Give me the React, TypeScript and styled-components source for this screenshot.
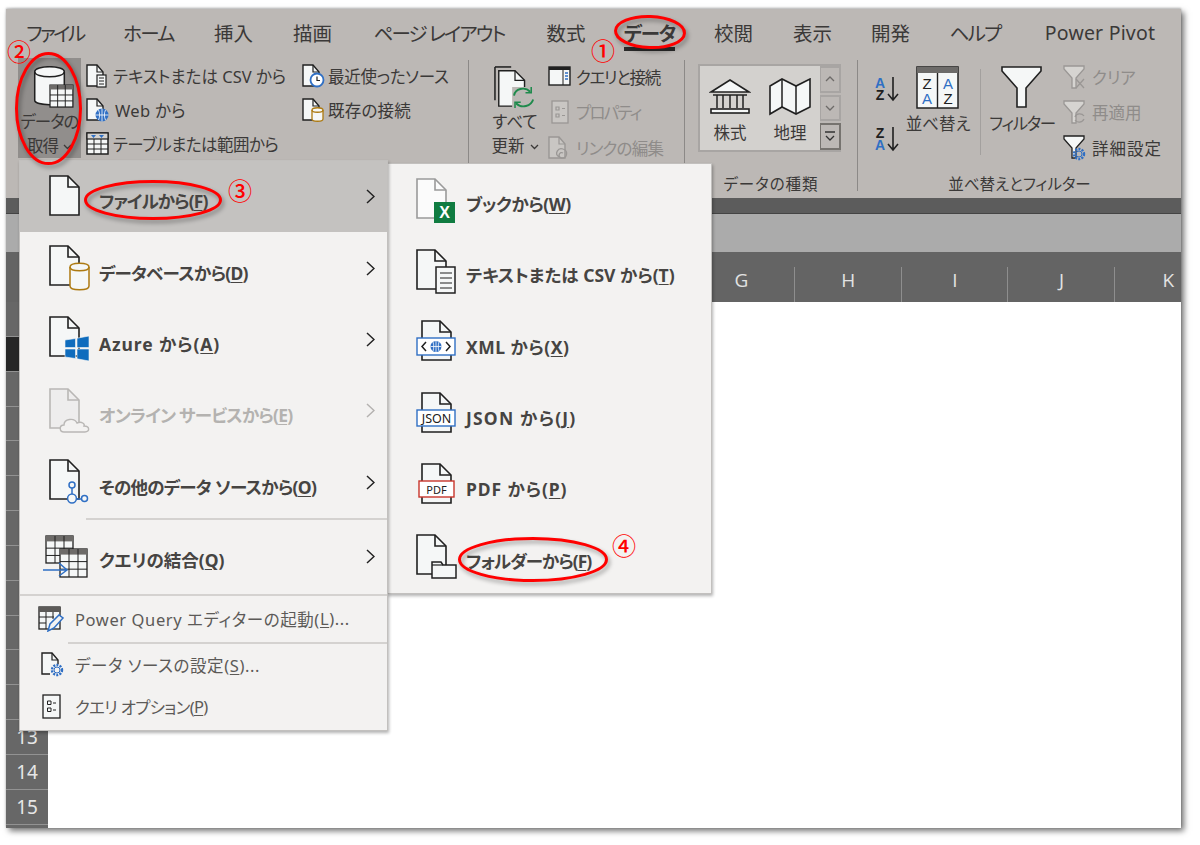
import React from "react";
import styled, { createGlobalStyle } from "styled-components";

const Global = createGlobalStyle`
    html, body {
        margin: 0;
        padding: 0;
        background: #fff;
    }
    body {
        font-family: "Noto Sans", "Noto Sans CJK JP", sans-serif;
        font-feature-settings: "palt";
        color: #3b3938;
    }
`

const Page = styled.div`
    position: relative;
    width: 1200px;
    height: 845px;
    padding: 9px 0 0 6px;
    box-sizing: border-box;
    overflow: hidden;
`

const Excel = styled.div`
    width: 1175px;
    height: 819px;
    display: flex;
    flex-direction: column;
    background: #fff;
    overflow: hidden;
    box-shadow: 3px 3px 6px rgba(0, 0, 0, .55), 0 -1px 2px rgba(0, 0, 0, .25);
`

const TabBar = styled.div`
    height: 42px;
    flex-shrink: 0;
    display: flex;
    padding-left: 21px;
    background: #bcb8b5;
`

const Tab = styled.div<{ $active?: boolean; $ls: number; $w: number; $ml: number }>`
    width: ${p => p.$w}px;
    margin-left: ${p => p.$ml}px;
    flex-shrink: 0;
    padding-top: 8px;
    display: flex;
    align-items: center;
    justify-content: center;
    font-size: 19.5px;
    white-space: nowrap;
    letter-spacing: ${p => p.$ls}px;
    font-weight: ${p => (p.$active ? 700 : 400)};
    border-bottom: 4px solid ${p => (p.$active ? "#2b2b2b" : "transparent")};
`

const Ribbon = styled.div`
    height: 147px;
    flex-shrink: 0;
    box-sizing: border-box;
    padding-top: 7px;
    display: flex;
    background: #bcb8b5;
`

const Group = styled.div<{ $w: number }>`
    width: ${p => p.$w}px;
    flex-shrink: 0;
    display: flex;
    flex-direction: column;
`

const GroupBody = styled.div<{ $pad: number }>`
    flex: 1;
    display: flex;
    padding-left: ${p => p.$pad}px;
`

const GroupLabel = styled.div<{ $ls?: number }>`
    height: 22px;
    margin-bottom: 3px;
    line-height: 22px;
    font-size: 15.5px;
    letter-spacing: ${p => p.$ls ?? 0}px;
    text-align: center;
    white-space: nowrap;
`

const GroupSep = styled.div`
    width: 1px;
    flex-shrink: 0;
    margin: 2px 0 7px;
    background: #8c8987;
`

const BigButton = styled.div<{ $w: number; $pressed?: boolean; $ml?: number }>`
    width: ${p => p.$w}px;
    height: 100px;
    flex-shrink: 0;
    margin-left: ${p => p.$ml ?? 0}px;
    padding-top: 8px;
    box-sizing: border-box;
    display: flex;
    flex-direction: column;
    align-items: center;
    background: ${p => (p.$pressed ? "#918e8c" : "transparent")};
`

const BigLabel = styled.div<{ $ls?: number }>`
    margin-top: 2px;
    font-size: 16.5px;
    line-height: 24px;
    letter-spacing: ${p => p.$ls ?? 0}px;
    text-align: center;
    white-space: nowrap;
`

const CmdColumn = styled.div<{ $w?: number; $ml?: number }>`
    width: ${p => (p.$w ? `${p.$w}px` : "auto")};
    flex-shrink: 0;
    margin-left: ${p => p.$ml ?? 0}px;
    padding-top: 1px;
    display: flex;
    flex-direction: column;
`

const Cmd = styled.div<{ $h: number; $off?: boolean; $ls?: number }>`
    height: ${p => p.$h}px;
    display: flex;
    align-items: center;
    font-size: 16.5px;
    white-space: nowrap;
    letter-spacing: ${p => p.$ls ?? 0}px;
    color: ${p => (p.$off ? "#8f8c8a" : "#3b3938")};
`

const CmdIcon = styled.div<{ $w: number }>`
    width: ${p => p.$w}px;
    flex-shrink: 0;
    display: flex;
    align-items: center;
`

const Gallery = styled.div`
    width: 143px;
    height: 88px;
    margin-top: 6px;
    flex-shrink: 0;
    box-sizing: border-box;
    display: flex;
    border: 2px solid #a8a5a3;
    border-right: 0;
`

const GalleryItems = styled.div`
    width: 120px;
    flex-shrink: 0;
    display: flex;
    background: #d3d1ce;
`

const GalleryItem = styled.div`
    width: 60px;
    padding-top: 12px;
    display: flex;
    flex-direction: column;
    align-items: center;
    font-size: 16.5px;
    line-height: 24px;
    gap: 5px;
`

const GalleryScroll = styled.div`
    flex: 1;
    display: flex;
    flex-direction: column;
    gap: 2px;
`

const ScrollButton = styled.div<{ $dark?: boolean }>`
    flex: 1;
    display: flex;
    align-items: center;
    justify-content: center;
    border: 2px solid ${p => (p.$dark ? "#76736f" : "#a8a5a3")};
    border-left-width: 1px;
    color: #6e6b69;
`

const SortColumn = styled.div`
    width: 27px;
    flex-shrink: 0;
    padding-top: 16px;
    display: flex;
    flex-direction: column;
    gap: 20px;
`

const SortSep = styled.div`
    width: 1px;
    height: 86px;
    flex-shrink: 0;
    margin: 11px 9px 0 10px;
    background: #a3a09e;
`

const Band = styled.div`
    height: 16px;
    flex-shrink: 0;
    box-sizing: border-box;
    background: #5c5c5c;
    border-bottom: 1px solid #444;
`

const FormulaBar = styled.div`
    height: 38px;
    flex-shrink: 0;
    background: #ababab;
`

const ColumnHeads = styled.div`
    height: 50px;
    flex-shrink: 0;
    display: flex;
    background: #646464;
`

const Corner = styled.div`
    width: 42px;
    flex-shrink: 0;
`

const ColumnHead = styled.div`
    width: 106.7px;
    flex-shrink: 0;
    box-sizing: border-box;
    padding-top: 6px;
    display: flex;
    align-items: center;
    justify-content: center;
    color: #e2e2e2;
    font-family: "Open Sans", sans-serif;
    font-size: 19px;
    position: relative;
    &::after {
        content: "";
        position: absolute;
        right: 0;
        top: 15px;
        bottom: 0;
        width: 1px;
        background: #8e8e8e;
    }
`

const SheetArea = styled.div`
    flex: 1;
    display: flex;
    min-height: 0;
`

const RowHeads = styled.div`
    width: 42px;
    flex-shrink: 0;
    display: flex;
    flex-direction: column;
    background: #676767;
`

const RowHead = styled.div<{ $selected?: boolean }>`
    height: 34.85px;
    flex-shrink: 0;
    box-sizing: border-box;
    display: flex;
    align-items: center;
    justify-content: center;
    color: #e6e6e6;
    font-size: 19px;
    background: ${p => (p.$selected ? "#262626" : "transparent")};
    border-bottom: 1px solid #929292;
`

const Menu = styled.div<{ $x: number; $y: number; $w: number; $h: number }>`
    position: absolute;
    left: ${p => p.$x}px;
    top: ${p => p.$y}px;
    width: ${p => p.$w}px;
    height: ${p => p.$h}px;
    box-sizing: border-box;
    background: #f3f2f1;
    border: 1px solid #c2c0be;
    box-shadow: 1px 2px 3px rgba(0, 0, 0, .3);
    display: flex;
    flex-direction: column;
`

const MainItem = styled.div<{ $active?: boolean; $off?: boolean; $h?: number }>`
    height: ${p => p.$h ?? 71.4}px;
    flex-shrink: 0;
    display: flex;
    align-items: center;
    padding-left: 29px;
    background: ${p => (p.$active ? "#c4c2c0" : "transparent")};
    color: ${p => (p.$off ? "#b4b2b0" : "#464442")};
    font-size: 17.5px;
    font-weight: 700;
    white-space: nowrap;
`

const ItemIcon = styled.div<{ $w: number; $ml?: number }>`
    width: ${p => p.$w}px;
    margin-left: ${p => p.$ml ?? 0}px;
    flex-shrink: 0;
    display: flex;
`

const ItemText = styled.span<{ $drop?: number; $ls?: number }>`
    margin-top: ${p => p.$drop ?? 8}px;
    letter-spacing: ${p => p.$ls ?? 0}px;
`

const Key = styled.span`
    text-decoration: underline;
    text-underline-offset: 2px;
`

const Chevron = styled.svg`
    margin-left: auto;
    margin-right: 12px;
    flex-shrink: 0;
`

const MenuSep = styled.div<{ $ml: number }>`
    height: 2px;
    flex-shrink: 0;
    margin-left: ${p => p.$ml}px;
    background: #d4d2d0;
`

const PlainItem = styled.div<{ $h: number; $ls: number }>`
    height: ${p => p.$h}px;
    flex-shrink: 0;
    display: flex;
    align-items: center;
    padding-left: 18px;
    font-size: 16.5px;
    letter-spacing: ${p => p.$ls}px;
    color: #5c5a58;
    white-space: nowrap;
`

const SubMenuBody = styled.div`
    padding-top: 1px;
    display: flex;
    flex-direction: column;
`

const SubItem = styled.div`
    height: 71.3px;
    flex-shrink: 0;
    display: flex;
    align-items: center;
    padding-left: 28px;
    font-size: 17.5px;
    font-weight: 700;
    color: #464442;
    white-space: nowrap;
`

const Ring = styled.svg<{ $x: number; $y: number }>`
    position: absolute;
    left: ${p => p.$x}px;
    top: ${p => p.$y}px;
    overflow: visible;
    filter: drop-shadow(2px 3px 2px rgba(0, 0, 0, .35));
`

const Step = styled.div<{ $x: number; $y: number }>`
    position: absolute;
    left: ${p => p.$x}px;
    top: ${p => p.$y}px;
    width: 28px;
    line-height: 28px;
    text-align: center;
    color: #f00;
    font-family: "Noto Sans CJK JP", sans-serif;
    font-size: 24px;
    font-weight: 500;
`

const INK = "#202020"
const PAPER = "#f5f7f7"
const BLUE = "#2f6fc4"

const Doc = ({ color = INK, fill = PAPER, w = 1.6 }: { color?: string; fill?: string; w?: number }) => (
    <>
        <path d="M1 1H19L30 12V40H1Z" fill={fill} stroke={color} strokeWidth={w} />
        <path d="M19 1V12H30" fill="none" stroke={color} strokeWidth={w} />
    </>
)

const IconFrame = ({ w, h, children }: { w: number; h: number; children: React.ReactNode }) => (
    <svg width={w} height={h} viewBox={`0 0 ${w} ${h}`} style={{ display: "block" }}>
        {children}
    </svg>
)

const FileIcon = () => <IconFrame w={42} h={44}><Doc /></IconFrame>

const DatabaseFileIcon = () => (
    <IconFrame w={42} h={46}>
        <Doc />
        <path d="M21 22C21 17 40 17 40 22V41C40 46 21 46 21 41Z" fill={PAPER} stroke="#ad7a12" strokeWidth="1.5" />
        <path d="M21 22C21 27 40 27 40 22" fill="none" stroke="#ad7a12" strokeWidth="1.5" />
    </IconFrame>
)

const AzureIcon = () => (
    <IconFrame w={42} h={46}>
        <Doc />
        <path d="M16 24L26.5 22.5V31.5H16ZM28 22.2L40 20V31.5H28ZM16 33H26.5V42.5L16 41ZM28 33H40V45L28 42.8Z" fill="#0f6cbd" stroke={PAPER} strokeWidth=".6" />
    </IconFrame>
)

const CloudFileIcon = () => (
    <IconFrame w={42} h={46}>
        <Doc color="#b9b7b5" fill="#eeeded" />
        <path d="M15 44C10 44 10 37 15 37C15 31 25 29 28 35C33 33 36 36 35 38C41 38 41 44 36 44Z" fill="#f3f2f1" stroke="#b9b7b5" strokeWidth="1.4" />
    </IconFrame>
)

const NetworkFileIcon = () => (
    <IconFrame w={42} h={46}>
        <Doc />
        <g fill={PAPER} stroke={BLUE} strokeWidth="1.5">
            <path d="M23 29V35M27 40H32" />
            <circle cx="23" cy="26" r="3" />
            <circle cx="23" cy="39.5" r="4.4" />
            <circle cx="35.5" cy="39.5" r="3" />
        </g>
    </IconFrame>
)

const GridSheet = ({ x, y, w, h }: { x: number; y: number; w: number; h: number }) => {
    const cx = [1 / 3, 2 / 3].map(f => x + w * f)
    const cy = [0.45, 0.72].map(f => y + h * f)
    return (
        <g>
            <rect x={x} y={y} width={w} height={h} fill={PAPER} stroke={INK} strokeWidth="1.3" />
            <rect x={x} y={y} width={w} height={h * 0.2} fill="#6d6b69" />
            {cx.map(v => <path key={v} d={`M${v} ${y}V${y + h}`} stroke={INK} strokeWidth="1" />)}
            {cy.map(v => <path key={v} d={`M${x} ${v}H${x + w}`} stroke={INK} strokeWidth="1" />)}
        </g>
    )
}

const MergeIcon = () => (
    <IconFrame w={46} h={44}>
        <GridSheet x={4} y={1} w={27} h={27} />
        <GridSheet x={18} y={14} w={27} h={28} />
        <path d="M1 35H24M17 28L25 35L17 41" fill="none" stroke={BLUE} strokeWidth="1.5" />
    </IconFrame>
)

const ExcelFileIcon = () => (
    <IconFrame w={42} h={46}>
        <Doc color="#9a9a9a" fill="#fbfbfb" />
        <rect x="18" y="24" width="21" height="21" fill="#107c41" />
        <text x="28.5" y="40" fontFamily="Liberation Sans" fontWeight="700" fontSize="16" fill="#fff" textAnchor="middle">X</text>
    </IconFrame>
)

const TextFileIcon = () => (
    <IconFrame w={42} h={46}>
        <Doc />
        <rect x="20" y="18" width="19" height="26" fill={PAPER} stroke={INK} strokeWidth="1.5" />
        <path d="M24 24H36M24 29H36M24 34H36M24 39H36" stroke={INK} strokeWidth="1.2" />
    </IconFrame>
)

const XmlFileIcon = () => (
    <IconFrame w={42} h={46}>
        <g transform="translate(5 0)"><Doc /></g>
        <rect x="1" y="18" width="38" height="17" fill="#fff" stroke={BLUE} strokeWidth="1.4" />
        <path d="M10 22L6 26.5L10 31M30 22L34 26.5L30 31" fill="none" stroke={INK} strokeWidth="1.5" />
        <circle cx="20" cy="26.5" r="5.5" fill={BLUE} />
        <path d="M14.5 26.5H25.5M20 21V32M17 22C18 25 18 28 17 31M23 22C22 25 22 28 23 31" stroke="#fff" strokeWidth=".8" fill="none" />
    </IconFrame>
)

const LabelFileIcon = ({ label, color }: { label: string; color: string }) => (
    <IconFrame w={42} h={46}>
        <g transform="translate(5 0)"><Doc /></g>
        <rect x={color === BLUE ? 1 : 3} y="18" width={color === BLUE ? 38 : 35} height="16" fill="#fff" stroke={color} strokeWidth="1.4" />
        <text x="20.5" y="30.5" fontFamily="Noto Sans" fontWeight="400" fontSize={color === BLUE ? 12.5 : 11} fill={INK} textAnchor="middle">{label}</text>
    </IconFrame>
)

const FolderFileIcon = () => (
    <IconFrame w={42} h={46}>
        <Doc />
        <path d="M16 28H25L27 31H40V44H16Z" fill={PAPER} stroke={INK} strokeWidth="1.5" />
        <path d="M16 31H27" stroke={INK} strokeWidth="1.2" />
    </IconFrame>
)

const SmallDoc = ({ color = INK, fill = PAPER }: { color?: string; fill?: string }) => (
    <>
        <path d="M1 1H11L17 8V22H1Z" fill={fill} stroke={color} strokeWidth="1.4" />
        <path d="M11 1V8H17" fill="none" stroke={color} strokeWidth="1.2" />
    </>
)

const TextSmallIcon = () => (
    <IconFrame w={24} h={24}>
        <SmallDoc />
        <rect x="11" y="11" width="9" height="12" fill={PAPER} stroke={INK} strokeWidth="1.2" />
        <path d="M13 14H18M13 17H18M13 20H18" stroke={INK} />
    </IconFrame>
)

const WebSmallIcon = () => (
    <IconFrame w={24} h={24}>
        <SmallDoc />
        <circle cx="16" cy="17" r="6.5" fill={BLUE} />
        <path d="M9.5 17H22.5M16 10.5V23.5M12.5 12C14 15 14 19 12.5 22M19.5 12C18 15 18 19 19.5 22" stroke="#fff" strokeWidth=".8" fill="none" />
    </IconFrame>
)

const TableSmallIcon = () => (
    <IconFrame w={24} h={24}>
        <rect x="1" y="1" width="21" height="21" fill={PAPER} stroke={INK} strokeWidth="1.5" />
        <rect x="1" y="1" width="21" height="6" fill="#d4d2d0" stroke={INK} strokeWidth="1.2" />
        <path d="M1 12H22M1 17H22M8 7V22M15 7V22" stroke={INK} />
        <path d="M5 3H10L7.5 6ZM13 3H18L15.5 6Z" fill={BLUE} />
    </IconFrame>
)

const RecentSmallIcon = () => (
    <IconFrame w={24} h={24}>
        <SmallDoc />
        <circle cx="15" cy="16" r="6.5" fill="#fff" stroke={BLUE} strokeWidth="1.8" />
        <path d="M15 12.5V16.5H18" fill="none" stroke={INK} strokeWidth="1.2" />
    </IconFrame>
)

const ExistingSmallIcon = () => (
    <IconFrame w={24} h={24}>
        <SmallDoc />
        <path d="M10 12C10 9 21 9 21 12V21C21 24 10 24 10 21Z" fill={PAPER} stroke="#ad7a12" strokeWidth="1.3" />
        <path d="M10 12C10 15 21 15 21 12" fill="none" stroke="#ad7a12" strokeWidth="1.3" />
    </IconFrame>
)

const DataFetchIcon = () => (
    <IconFrame w={50} h={44}>
        <g transform="translate(8 0)">
            <path d="M1 6C1 -1 32 -1 32 6V36C32 42 1 42 1 36Z" fill={PAPER} stroke={INK} strokeWidth="1.6" />
            <path d="M1 6C1 13 32 13 32 6" fill="none" stroke={INK} strokeWidth="1.6" />
            <GridSheet x={17} y={20} w={24} h={23} />
        </g>
    </IconFrame>
)

const RefreshAllIcon = () => (
    <IconFrame w={44} h={44}>
        <path d="M1 1V36" stroke={INK} strokeWidth="1.6" />
        <path d="M1 1H18" stroke={INK} strokeWidth="1.6" />
        <path d="M5 5H22L32 15V42H5Z" fill={PAPER} stroke={INK} strokeWidth="1.5" />
        <path d="M22 5V15H32" fill="none" stroke={INK} strokeWidth="1.3" />
        <rect x="19" y="22" width="24" height="22" fill="#bcb8b5" />
        <path d="M21 31C22 24 32 21 38 27M41 35C39 42 29 45 23 39" fill="none" stroke="#1f8a4c" strokeWidth="2" />
        <path d="M39 22V28H33M22 44V38H28" fill="none" stroke="#1f8a4c" strokeWidth="1.6" />
    </IconFrame>
)

const QueryPaneIcon = () => (
    <IconFrame w={24} h={24}>
        <rect x="1" y="2" width="21" height="18" fill={PAPER} stroke={INK} strokeWidth="1.4" />
        <rect x="1" y="2" width="21" height="3" fill={INK} />
        <path d="M15 5V20" stroke={INK} />
        <path d="M17 8H20M17 11H20M17 14H20" stroke={BLUE} strokeWidth="1.5" />
    </IconFrame>
)

const PropsIcon = ({ color = "#9a9795" }: { color?: string }) => (
    <IconFrame w={24} h={24}>
        <rect x="4" y="1" width="16" height="22" fill="#c9c6c3" stroke={color} strokeWidth="1.3" />
        <path d="M8 7H11V10H8ZM8 14H11V17H8ZM14 8.5H17M14 15.5H17" fill="none" stroke={color} strokeWidth="1.2" />
    </IconFrame>
)

const LinksIcon = () => (
    <IconFrame w={24} h={24}>
        <SmallDoc color="#9a9795" fill="#c9c6c3" />
        <path d="M11 21C6 18 10 11 15 13C21 15 19 23 13 22C9 20 12 15 15 17" fill="none" stroke="#9a9795" strokeWidth="1.3" />
    </IconFrame>
)

const BankIcon = () => (
    <IconFrame w={42} h={38}>
        <path d="M21 2L40 14H2Z" fill={PAPER} stroke={INK} strokeWidth="1.6" />
        <path d="M4 17H38M8 17V30M14 17V30M21 17V30M28 17V30M34 17V30" stroke={INK} strokeWidth="1.5" />
        <rect x="2" y="31" width="38" height="4" fill={PAPER} stroke={INK} strokeWidth="1.6" />
    </IconFrame>
)

const MapIcon = () => (
    <IconFrame w={44} h={38}>
        <path d="M2 8L14 1L28 8L42 1V29L28 36L14 29L2 36Z" fill={PAPER} stroke={INK} strokeWidth="1.6" />
        <path d="M14 1V29M28 8V36" stroke={INK} strokeWidth="1.5" />
    </IconFrame>
)

const SortIcon = ({ top, bottom }: { top: string; bottom: string }) => (
    <IconFrame w={28} h={30}>
        <text x="7" y="14" fontFamily="Liberation Sans" fontWeight="700" fontSize="14" fill={top === "A" ? BLUE : INK} textAnchor="middle">{top}</text>
        <text x="7" y="26" fontFamily="Liberation Sans" fontWeight="700" fontSize="14" fill={bottom === "A" ? BLUE : INK} textAnchor="middle">{bottom}</text>
        <path d="M20 3V26M15 20L20 26L25 20" fill="none" stroke={INK} strokeWidth="1.6" />
    </IconFrame>
)

const SortDialogIcon = () => (
    <IconFrame w={44} h={44}>
        <rect x="1" y="1" width="41" height="41" fill={PAPER} stroke={INK} strokeWidth="1.5" />
        <rect x="1" y="1" width="41" height="6" fill="#6d6b69" />
        <path d="M21.5 7V42" stroke={INK} strokeWidth="1.4" />
        <g fontFamily="Liberation Sans" fontSize="15" textAnchor="middle">
            <text x="11" y="23" fill={INK}>Z</text>
            <text x="32" y="23" fill={BLUE}>A</text>
            <text x="11" y="38" fill={BLUE}>A</text>
            <text x="32" y="38" fill={INK}>Z</text>
        </g>
    </IconFrame>
)

const FunnelIcon = () => (
    <IconFrame w={42} h={44}>
        <path d="M1 1H40V5L25 22V41H16V22L1 5Z" fill={PAPER} stroke={INK} strokeWidth="1.6" />
    </IconFrame>
)

const SmallFunnel = ({ color, fill }: { color: string; fill: string }) => (
    <path d="M1 1H21V4L13 13V23H9V13L1 4Z" fill={fill} stroke={color} strokeWidth="1.3" />
)

const ClearIcon = () => (
    <IconFrame w={26} h={24}>
        <SmallFunnel color="#9a9795" fill="#d6d4d1" />
        <path d="M13 14L21 23M21 14L13 23" stroke="#9a9795" strokeWidth="1.3" />
    </IconFrame>
)

const ReapplyIcon = () => (
    <IconFrame w={26} h={24}>
        <SmallFunnel color="#9a9795" fill="#d6d4d1" />
        <path d="M12 17C13 13 19 13 21 16M21 19C19 23 14 23 12 20" fill="none" stroke="#9a9795" strokeWidth="1.3" />
    </IconFrame>
)

const Gear = ({ cx, cy, r = 5 }: { cx: number; cy: number; r?: number }) => (
    <g fill="none" stroke={BLUE}>
        <circle cx={cx} cy={cy} r={r} strokeWidth="2.4" strokeDasharray="2 1.2" />
        <circle cx={cx} cy={cy} r={r - 2} strokeWidth="1" />
    </g>
)

const AdvancedIcon = () => (
    <IconFrame w={26} h={26}>
        <SmallFunnel color={INK} fill={PAPER} />
        <Gear cx={16} cy={19} />
    </IconFrame>
)

const EditorIcon = () => (
    <IconFrame w={26} h={26}>
        <rect x="1" y="1" width="21" height="22" fill={PAPER} stroke={INK} strokeWidth="1.3" />
        <rect x="1" y="1" width="22" height="5" fill="#5c5a58" />
        <path d="M1 11H16M1 17H8M8 6V23M15 6V13" stroke={INK} />
        <path d="M10 25L12 18L21 9L25 12L16 22Z" fill="#f3f2f1" stroke={BLUE} strokeWidth="1.5" />
    </IconFrame>
)

const SourceSettingsIcon = () => (
    <IconFrame w={26} h={26}>
        <SmallDoc />
        <rect x="9" y="12" width="15" height="13" fill="#f3f2f1" />
        <Gear cx={16} cy={18} />
    </IconFrame>
)

const OptionsIcon = () => (
    <IconFrame w={26} h={26}>
        <rect x="2" y="1" width="17" height="23" fill={PAPER} stroke={INK} strokeWidth="1.3" />
        <path d="M6.5 7H10V10.5H6.5ZM6.5 14H10V17.5H6.5ZM12 9H15M12 16H15" fill="none" stroke={INK} />
    </IconFrame>
)

const Arrow = ({ off }: { off?: boolean }) => (
    <Chevron width="9" height="15" viewBox="0 0 9 15">
        <path d="M1 1L8 7.5L1 14" fill="none" stroke={off ? "#b4b2b0" : "#222"} strokeWidth="1.5" />
    </Chevron>
)

const Caret = () => (
    <svg width="9" height="6" viewBox="0 0 9 6" style={{ marginLeft: 5, verticalAlign: 2 }}>
        <path d="M1 1L4.5 4.5L8 1" fill="none" stroke="#3b3938" strokeWidth="1.3" />
    </svg>
)

const TABS = [
    { label: "ファイル", w: 56, ml: 0, ls: -2.5 },
    { label: "ホーム", w: 49, ml: 41, ls: -1.7 },
    { label: "挿入", w: 39, ml: 41, ls: 0 },
    { label: "描画", w: 39, ml: 40, ls: 0 },
    { label: "ページ レイアウト", w: 130, ml: 42, ls: -1.9 },
    { label: "数式", w: 40, ml: 42, ls: 0 },
    { label: "データ", w: 51, ml: 38, ls: -1.3 },
    { label: "校閲", w: 39, ml: 39, ls: 0 },
    { label: "表示", w: 39, ml: 40, ls: 0 },
    { label: "開発", w: 39, ml: 39, ls: 0 },
    { label: "ヘルプ", w: 50, ml: 40, ls: -1.7 },
    { label: "Power Pivot", w: 114, ml: 43, ls: 0.2 },
]

// the columns A-F and the rows 1-12 sit behind the open menus, only their cells show
const COLUMNS = ["", "", "", "", "", "", "G", "H", "I", "J", "K"]
const ROWS = Array.from({ length: 15 }, (_, i) => i + 1)

const MAIN_ITEMS = [
    { icon: <FileIcon />, text: "ファイルから", key: "F", ls: -0.9, active: true },
    { icon: <DatabaseFileIcon />, text: "データベースから", key: "D", ls: -0.7 },
    { icon: <AzureIcon />, text: "Azure から", key: "A", ls: 0.9 },
    { icon: <CloudFileIcon />, text: "オンライン サービスから", key: "E", ls: -0.8, off: true },
    { icon: <NetworkFileIcon />, text: "その他のデータ ソースから", key: "O", ls: -0.7 },
]

const SUB_ITEMS = [
    { icon: <ExcelFileIcon />, text: "ブックから", key: "W", ls: -0.4 },
    { icon: <TextFileIcon />, text: "テキストまたは CSV から", key: "T", ls: 0 },
    { icon: <XmlFileIcon />, text: "XML から", key: "X", ls: 0.5 },
    { icon: <LabelFileIcon label="JSON" color={BLUE} />, text: "JSON から", key: "J", ls: 1.2 },
    { icon: <LabelFileIcon label="PDF" color="#c8352b" />, text: "PDF から", key: "P", ls: 0.9 },
    { icon: <FolderFileIcon />, text: "フォルダーから", key: "F", ls: -1 },
]

const RINGS = [
    { x: 614, y: 15, w: 72, h: 34, tilt: 2 },
    { x: 15, y: 52, w: 67, h: 113, tilt: 0 },
    { x: 84, y: 180, w: 138, h: 40, tilt: 0 },
    { x: 458, y: 537, w: 150, h: 45, tilt: 0 },
]

const STEPS = [
    { x: 589, y: 36, label: "①" },
    { x: 5, y: 37, label: "②" },
    { x: 226, y: 176, label: "③" },
    { x: 610, y: 531, label: "④" },
]

export default function App() {
    return (
        <Page>
            <Global />
            <Excel>
                <TabBar>
                    {TABS.map(t => (
                        <Tab key={t.label} $active={t.label === "データ"} $w={t.w} $ml={t.ml} $ls={t.ls}>{t.label}</Tab>
                    ))}
                </TabBar>
                <Ribbon>
                    <Group $w={462}>
                        <GroupBody $pad={12}>
                            <BigButton $w={63} $pressed>
                                <DataFetchIcon />
                                <BigLabel $ls={-1}>データの<br />取得<Caret /></BigLabel>
                            </BigButton>
                            <CmdColumn $w={216} $ml={5}>
                                <Cmd $h={34}><CmdIcon $w={27}><TextSmallIcon /></CmdIcon>テキストまたは CSV から</Cmd>
                                <Cmd $h={34} $ls={0.3}><CmdIcon $w={29}><WebSmallIcon /></CmdIcon>Web から</Cmd>
                                <Cmd $h={34} $ls={-0.5}><CmdIcon $w={27}><TableSmallIcon /></CmdIcon>テーブルまたは範囲から</Cmd>
                            </CmdColumn>
                            <CmdColumn>
                                <Cmd $h={34} $ls={-0.2}><CmdIcon $w={26}><RecentSmallIcon /></CmdIcon>最近使ったソース</Cmd>
                                <Cmd $h={34} $ls={0.2}><CmdIcon $w={26}><ExistingSmallIcon /></CmdIcon>既存の接続</Cmd>
                            </CmdColumn>
                        </GroupBody>
                    </Group>
                    <GroupSep />
                    <Group $w={215}>
                        <GroupBody $pad={21}>
                            <BigButton $w={50}>
                                <RefreshAllIcon />
                                <BigLabel>すべて<br />更新<Caret /></BigLabel>
                            </BigButton>
                            <CmdColumn $ml={8}>
                                <Cmd $h={35.5} $ls={-1.3}><CmdIcon $w={28}><QueryPaneIcon /></CmdIcon>クエリと接続</Cmd>
                                <Cmd $h={35.5} $ls={-1.8} $off><CmdIcon $w={28}><PropsIcon /></CmdIcon>プロパティ</Cmd>
                                <Cmd $h={35.5} $ls={-0.8} $off><CmdIcon $w={28}><LinksIcon /></CmdIcon>リンクの編集</Cmd>
                            </CmdColumn>
                        </GroupBody>
                    </Group>
                    <GroupSep />
                    <Group $w={172}>
                        <GroupBody $pad={13}>
                            <Gallery>
                                <GalleryItems>
                                    <GalleryItem><BankIcon />株式</GalleryItem>
                                    <GalleryItem><MapIcon />地理</GalleryItem>
                                </GalleryItems>
                                <GalleryScroll>
                                    <ScrollButton>
                                        <svg width="10" height="6" viewBox="0 0 10 6"><path d="M1 5L5 1L9 5" fill="none" stroke="#6e6b69" strokeWidth="1.3" /></svg>
                                    </ScrollButton>
                                    <ScrollButton>
                                        <svg width="10" height="6" viewBox="0 0 10 6"><path d="M1 1L5 5L9 1" fill="none" stroke="#6e6b69" strokeWidth="1.3" /></svg>
                                    </ScrollButton>
                                    <ScrollButton $dark>
                                        <svg width="10" height="11" viewBox="0 0 10 11"><path d="M0 1H10M1 5L5 9L9 5" fill="none" stroke="#333" strokeWidth="1.3" /></svg>
                                    </ScrollButton>
                                </GalleryScroll>
                            </Gallery>
                        </GroupBody>
                        <GroupLabel $ls={1}>データの種類</GroupLabel>
                    </Group>
                    <GroupSep />
                    <Group $w={323}>
                        <GroupBody $pad={15}>
                            <SortColumn>
                                <SortIcon top="A" bottom="Z" />
                                <SortIcon top="Z" bottom="A" />
                            </SortColumn>
                            <BigButton $w={64} $ml={6}>
                                <SortDialogIcon />
                                <BigLabel>並べ替え</BigLabel>
                            </BigButton>
                            <SortSep />
                            <BigButton $w={64}>
                                <FunnelIcon />
                                <BigLabel $ls={-1.4}>フィルター</BigLabel>
                            </BigButton>
                            <CmdColumn $ml={9}>
                                <Cmd $h={35.5} $off><CmdIcon $w={29}><ClearIcon /></CmdIcon>クリア</Cmd>
                                <Cmd $h={35.5} $off><CmdIcon $w={29}><ReapplyIcon /></CmdIcon>再適用</Cmd>
                                <Cmd $h={35.5} $ls={1}><CmdIcon $w={29}><AdvancedIcon /></CmdIcon>詳細設定</Cmd>
                            </CmdColumn>
                        </GroupBody>
                        <GroupLabel>並べ替えとフィルター</GroupLabel>
                    </Group>
                </Ribbon>
                <Band />
                <FormulaBar />
                <ColumnHeads>
                    <Corner />
                    {COLUMNS.map((c, i) => <ColumnHead key={i}>{c}</ColumnHead>)}
                </ColumnHeads>
                <SheetArea>
                    <RowHeads>
                        {ROWS.map(r => <RowHead key={r} $selected={r === 2}>{r >= 13 ? r : ""}</RowHead>)}
                    </RowHeads>
                </SheetArea>
            </Excel>

            <Menu $x={387} $y={163} $w={325} $h={431}>
                <SubMenuBody>
                    {SUB_ITEMS.map(item => (
                        <SubItem key={item.key + item.text}>
                            <ItemIcon $w={50}>{item.icon}</ItemIcon>
                            <ItemText $drop={6} $ls={item.ls}>{item.text}(<Key>{item.key}</Key>)</ItemText>
                        </SubItem>
                    ))}
                </SubMenuBody>
            </Menu>

            <Menu $x={19} $y={160} $w={369} $h={571}>
                {MAIN_ITEMS.map(item => (
                    <MainItem key={item.key} $active={item.active} $off={item.off}>
                        <ItemIcon $w={50}>{item.icon}</ItemIcon>
                        <ItemText $ls={item.ls}>{item.text}(<Key>{item.key}</Key>)</ItemText>
                        <Arrow off={item.off} />
                    </MainItem>
                ))}
                <MenuSep $ml={66} />
                <MainItem $h={74}>
                    <ItemIcon $w={57} $ml={-7}><MergeIcon /></ItemIcon>
                    <ItemText $drop={6}>クエリの結合(<Key>Q</Key>)</ItemText>
                    <Arrow />
                </MainItem>
                <MenuSep $ml={0} />
                <PlainItem $h={46} $ls={0.6}>
                    <ItemIcon $w={37}><EditorIcon /></ItemIcon>
                    Power Query エディターの起動(<Key>L</Key>)...
                </PlainItem>
                <MenuSep $ml={48} />
                <PlainItem $h={43} $ls={0.6}>
                    <ItemIcon $w={34} $ml={3}><SourceSettingsIcon /></ItemIcon>
                    データ ソースの設定(<Key>S</Key>)...
                </PlainItem>
                <PlainItem $h={40} $ls={-0.7}>
                    <ItemIcon $w={34} $ml={3}><OptionsIcon /></ItemIcon>
                    クエリ オプション(<Key>P</Key>)
                </PlainItem>
            </Menu>

            {RINGS.map(r => (
                <Ring key={r.x} $x={r.x} $y={r.y} width={r.w} height={r.h} viewBox={`0 0 ${r.w} ${r.h}`}>
                    <ellipse cx={r.w / 2} cy={r.h / 2} rx={r.w / 2 - 1.5} ry={r.h / 2 - 1.5} fill="none" stroke="#f00" strokeWidth="3" transform={`rotate(${r.tilt} ${r.w / 2} ${r.h / 2})`} />
                </Ring>
            ))}
            {STEPS.map(s => <Step key={s.label} $x={s.x} $y={s.y}>{s.label}</Step>)}
        </Page>
    )
}
